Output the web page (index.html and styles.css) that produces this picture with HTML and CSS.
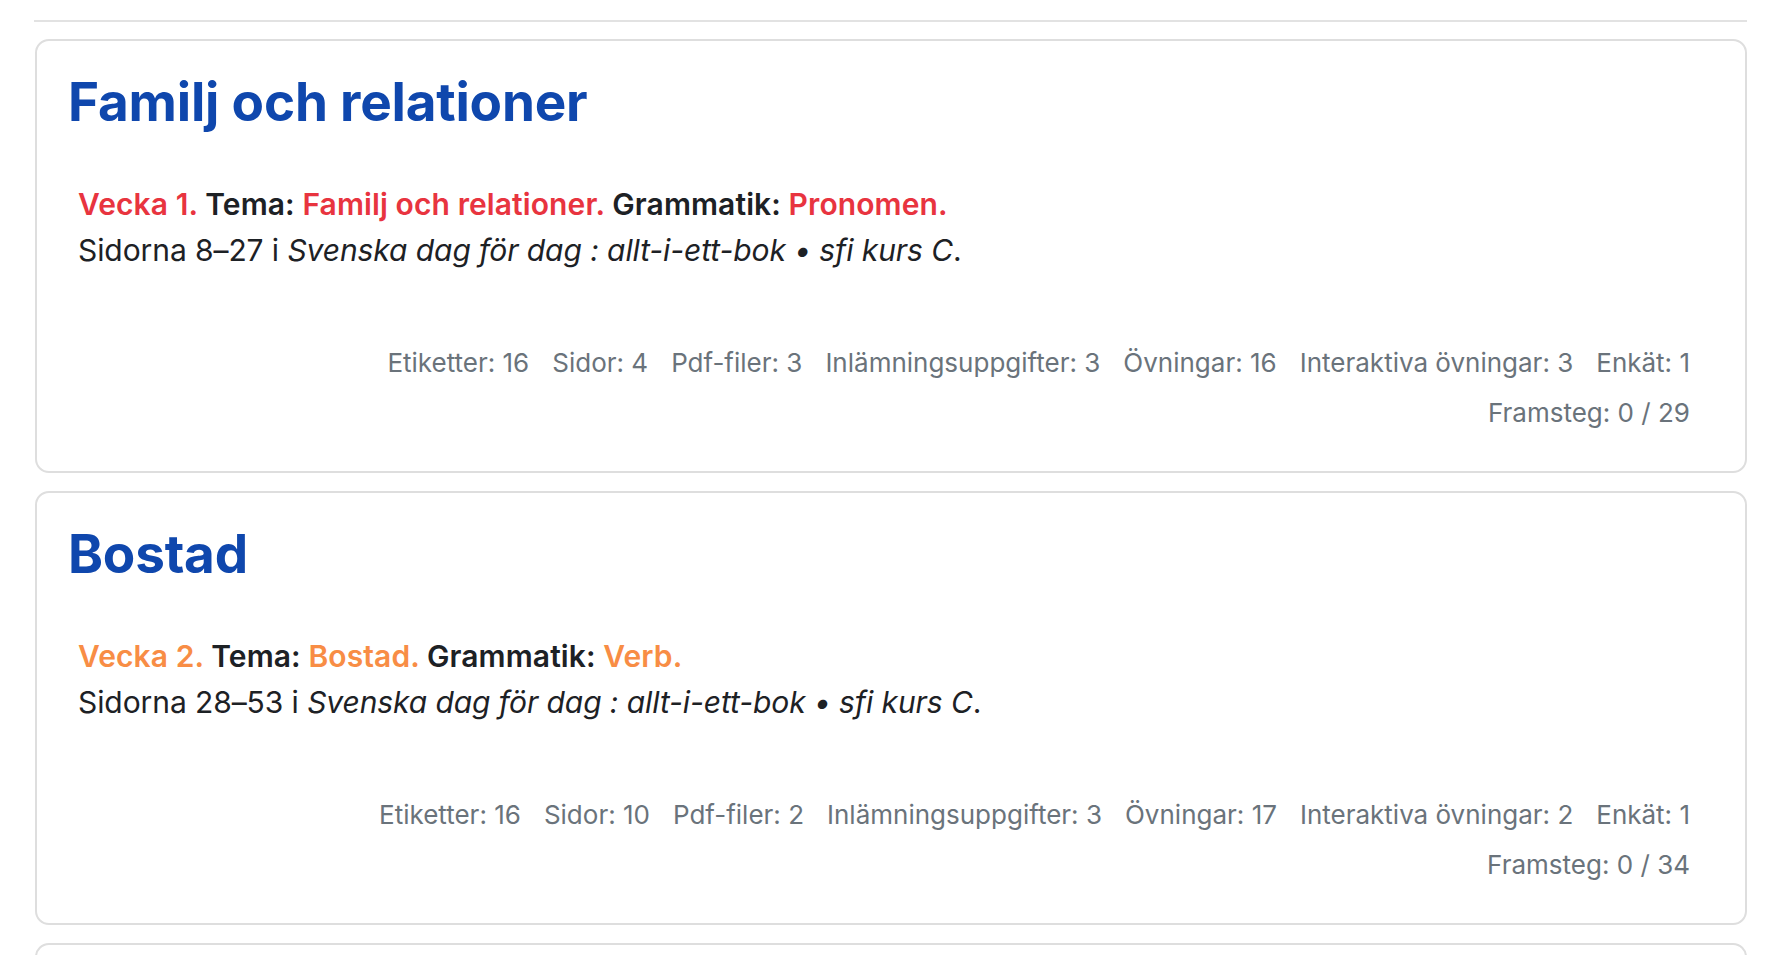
FILE: index.html
```html
<!DOCTYPE html>
<html lang="sv">
<head>
<meta charset="utf-8">
<title>Kurs</title>
<link rel="stylesheet" href="styles.css">
</head>
<body>
<div class="page">
  <hr class="sep">
  <ul class="sections">
    <li class="section">
      <h3 class="sectionname">Familj och relationer</h3>
      <div class="summary">
        <p><strong><span class="c-red">Vecka 1.</span> Tema: <span class="c-red">Familj och relationer.</span> Grammatik: <span class="c-red">Pronomen.</span></strong><br>Sidorna 8–27 i <em>Svenska dag för dag : allt-i-ett-bok • sfi kurs C</em>.</p>
      </div>
      <div class="activities">
        <span>Etiketter: 16</span>
        <span>Sidor: 4</span>
        <span>Pdf-filer: 3</span>
        <span>Inlämningsuppgifter: 3</span>
        <span>Övningar: 16</span>
        <span>Interaktiva övningar: 3</span>
        <span>Enkät: 1</span>
      </div>
      <div class="progress">Framsteg: 0 / 29</div>
    </li>
    <li class="section">
      <h3 class="sectionname">Bostad</h3>
      <div class="summary">
        <p><strong><span class="c-orange">Vecka 2.</span> Tema: <span class="c-orange">Bostad.</span> Grammatik: <span class="c-orange">Verb.</span></strong><br>Sidorna 28–53 i <em>Svenska dag för dag : allt-i-ett-bok • sfi kurs C</em>.</p>
      </div>
      <div class="activities">
        <span>Etiketter: 16</span>
        <span>Sidor: 10</span>
        <span>Pdf-filer: 2</span>
        <span>Inlämningsuppgifter: 3</span>
        <span>Övningar: 17</span>
        <span>Interaktiva övningar: 2</span>
        <span>Enkät: 1</span>
      </div>
      <div class="progress">Framsteg: 0 / 34</div>
    </li>
    <li class="section section-next"></li>
  </ul>
</div>
</body>
</html>
```
FILE: styles.css
```css
html, body {
  margin: 0;
  padding: 0;
  background: #ffffff;
}
body {
  font-family: Inter, "Noto Sans", sans-serif;
  color: #1d2125;
  overflow: hidden;
  height: 955px;
}
.page {
  padding: 20px 31px 0 34px;
}
.sep {
  margin: 0;
  border: 0;
  border-top: 2px solid #e2e2e2;
}
.sections {
  list-style: none;
  margin: 17px 0 0 0;
  padding: 0;
  display: flex;
  flex-direction: column;
  gap: 18px;
}
.section {
  border: 2px solid #dedede;
  border-radius: 14px;
  padding: 29px 55px 40px 31px;
  margin-left: 1px;
}
.section-next {
  min-height: 300px;
}
.sectionname {
  margin: 0;
  font-size: 53px;
  line-height: 64px;
  font-weight: 700;
  color: #0f47ad;
  letter-spacing: -0.2px;
}
.summary {
  margin: 47px 0 0 10px;
}
.summary p {
  margin: 0;
  font-size: 30px;
  line-height: 46px;
  letter-spacing: -0.08px;
}
.summary strong {
  font-weight: 600;
  letter-spacing: 0.1px;
}
.c-red { color: #e8343f; }
.c-orange { color: #f88d45; }
.activities {
  margin-top: 72px;
  display: flex;
  justify-content: flex-end;
  gap: 23px;
  font-size: 26px;
  line-height: 36px;
  color: #6a737b;
}
.progress {
  margin-top: 14px;
  text-align: right;
  font-size: 26px;
  line-height: 36px;
  color: #6a737b;
}
```
